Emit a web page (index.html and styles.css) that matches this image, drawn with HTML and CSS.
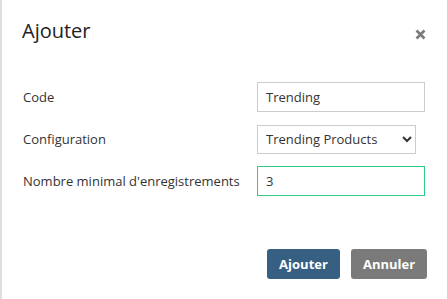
FILE: index.html
```html
<!DOCTYPE html>
<html>
<head>
  <link rel="stylesheet" href="styles.css">
</head>
<body>
  <div class="add-modal">
    <div class="add-modal-header">
      <h2 class="add-modal-title">Ajouter</h2>
      <button class="add-modal-close" type="button" aria-label="Fermer">
        <svg width="11" height="11" viewBox="0 0 11 11">
          <path d="M1.5 1.5 L9.5 9.5 M9.5 1.5 L1.5 9.5" stroke="#7a7a7a" stroke-width="2.6" stroke-linecap="butt"/>
        </svg>
      </button>
    </div>

    <form class="add-modal-form" onsubmit="event.preventDefault();">
      <div class="add-modal-field">
        <label class="add-modal-label" for="code">Code</label>
        <input type="text" id="code" class="add-modal-input" value="Trending">
      </div>
      <div class="add-modal-field">
        <label class="add-modal-label" for="config">Configuration</label>
        <select id="config" class="add-modal-select">
          <option>Trending Products</option>
        </select>
      </div>
      <div class="add-modal-field">
        <label class="add-modal-label" for="minRecords">Nombre minimal d'enregistrements</label>
        <input type="text" id="minRecords" class="add-modal-input add-modal-input-focus" value="3" autofocus>
      </div>

      <div class="add-modal-buttons">
        <button type="submit" class="add-modal-btn add-modal-save">Ajouter</button>
        <button type="button" class="add-modal-btn add-modal-cancel">Annuler</button>
      </div>
    </form>
  </div>
</body>
</html>
```

FILE: styles.css
```css
/* Page reset */
body {
  margin: 0;
  background-color: #fff;
  font-family: "Open Sans", "Noto Sans", sans-serif;
  color: #333;
}

/* Modal panel */
.add-modal {
  height: 299px;
  box-sizing: border-box;
  border-left: 2px solid #dedede;
  background-color: #fff;
}

/* Header with title and close button */
.add-modal-header {
  display: flex;
  align-items: center;
  justify-content: space-between;
  padding: 15px 21px 0 20px;
  height: 30px;
}

.add-modal-title {
  margin: 0;
  font-size: 20px;
  font-weight: 400;
  color: #222;
}

.add-modal-close {
  border: none;
  background: none;
  padding: 0;
  margin-top: 9px;
  width: 11px;
  height: 11px;
  display: flex;
  cursor: pointer;
}

/* Form body */
.add-modal-form {
  display: flex;
  flex-direction: column;
  gap: 12px;
  padding: 37px 0 0 21px;
}

.add-modal-field {
  display: flex;
  align-items: center;
  height: 30px;
}

.add-modal-label {
  width: 234px;
  font-size: 13px;
  color: #333;
}

.add-modal-input,
.add-modal-select {
  box-sizing: border-box;
  height: 30px;
  border: 1px solid #ccc;
  border-radius: 0;
  background-color: #fff;
  font-family: "Open Sans", "Noto Sans", sans-serif;
  font-size: 13px;
  color: #333;
  outline: none;
}

.add-modal-input {
  width: 168px;
  padding: 0 8px;
}

.add-modal-select {
  width: 159px;
  height: 29px;
  padding: 0 4px;
}

.add-modal-input-focus {
  border-color: #2ecc85;
}

/* Footer buttons */
.add-modal-buttons {
  display: flex;
  justify-content: flex-end;
  gap: 11px;
  margin-top: 41px;
  padding-right: 20px;
}

.add-modal-btn {
  height: 30px;
  border: none;
  border-radius: 3px;
  color: #fff;
  font-family: "Open Sans", "Noto Sans", sans-serif;
  font-size: 13px;
  font-weight: 700;
  cursor: pointer;
}

.add-modal-save {
  width: 73px;
  background-color: #365f82;
}

.add-modal-cancel {
  width: 76px;
  background-color: #7a7a7a;
}
```
